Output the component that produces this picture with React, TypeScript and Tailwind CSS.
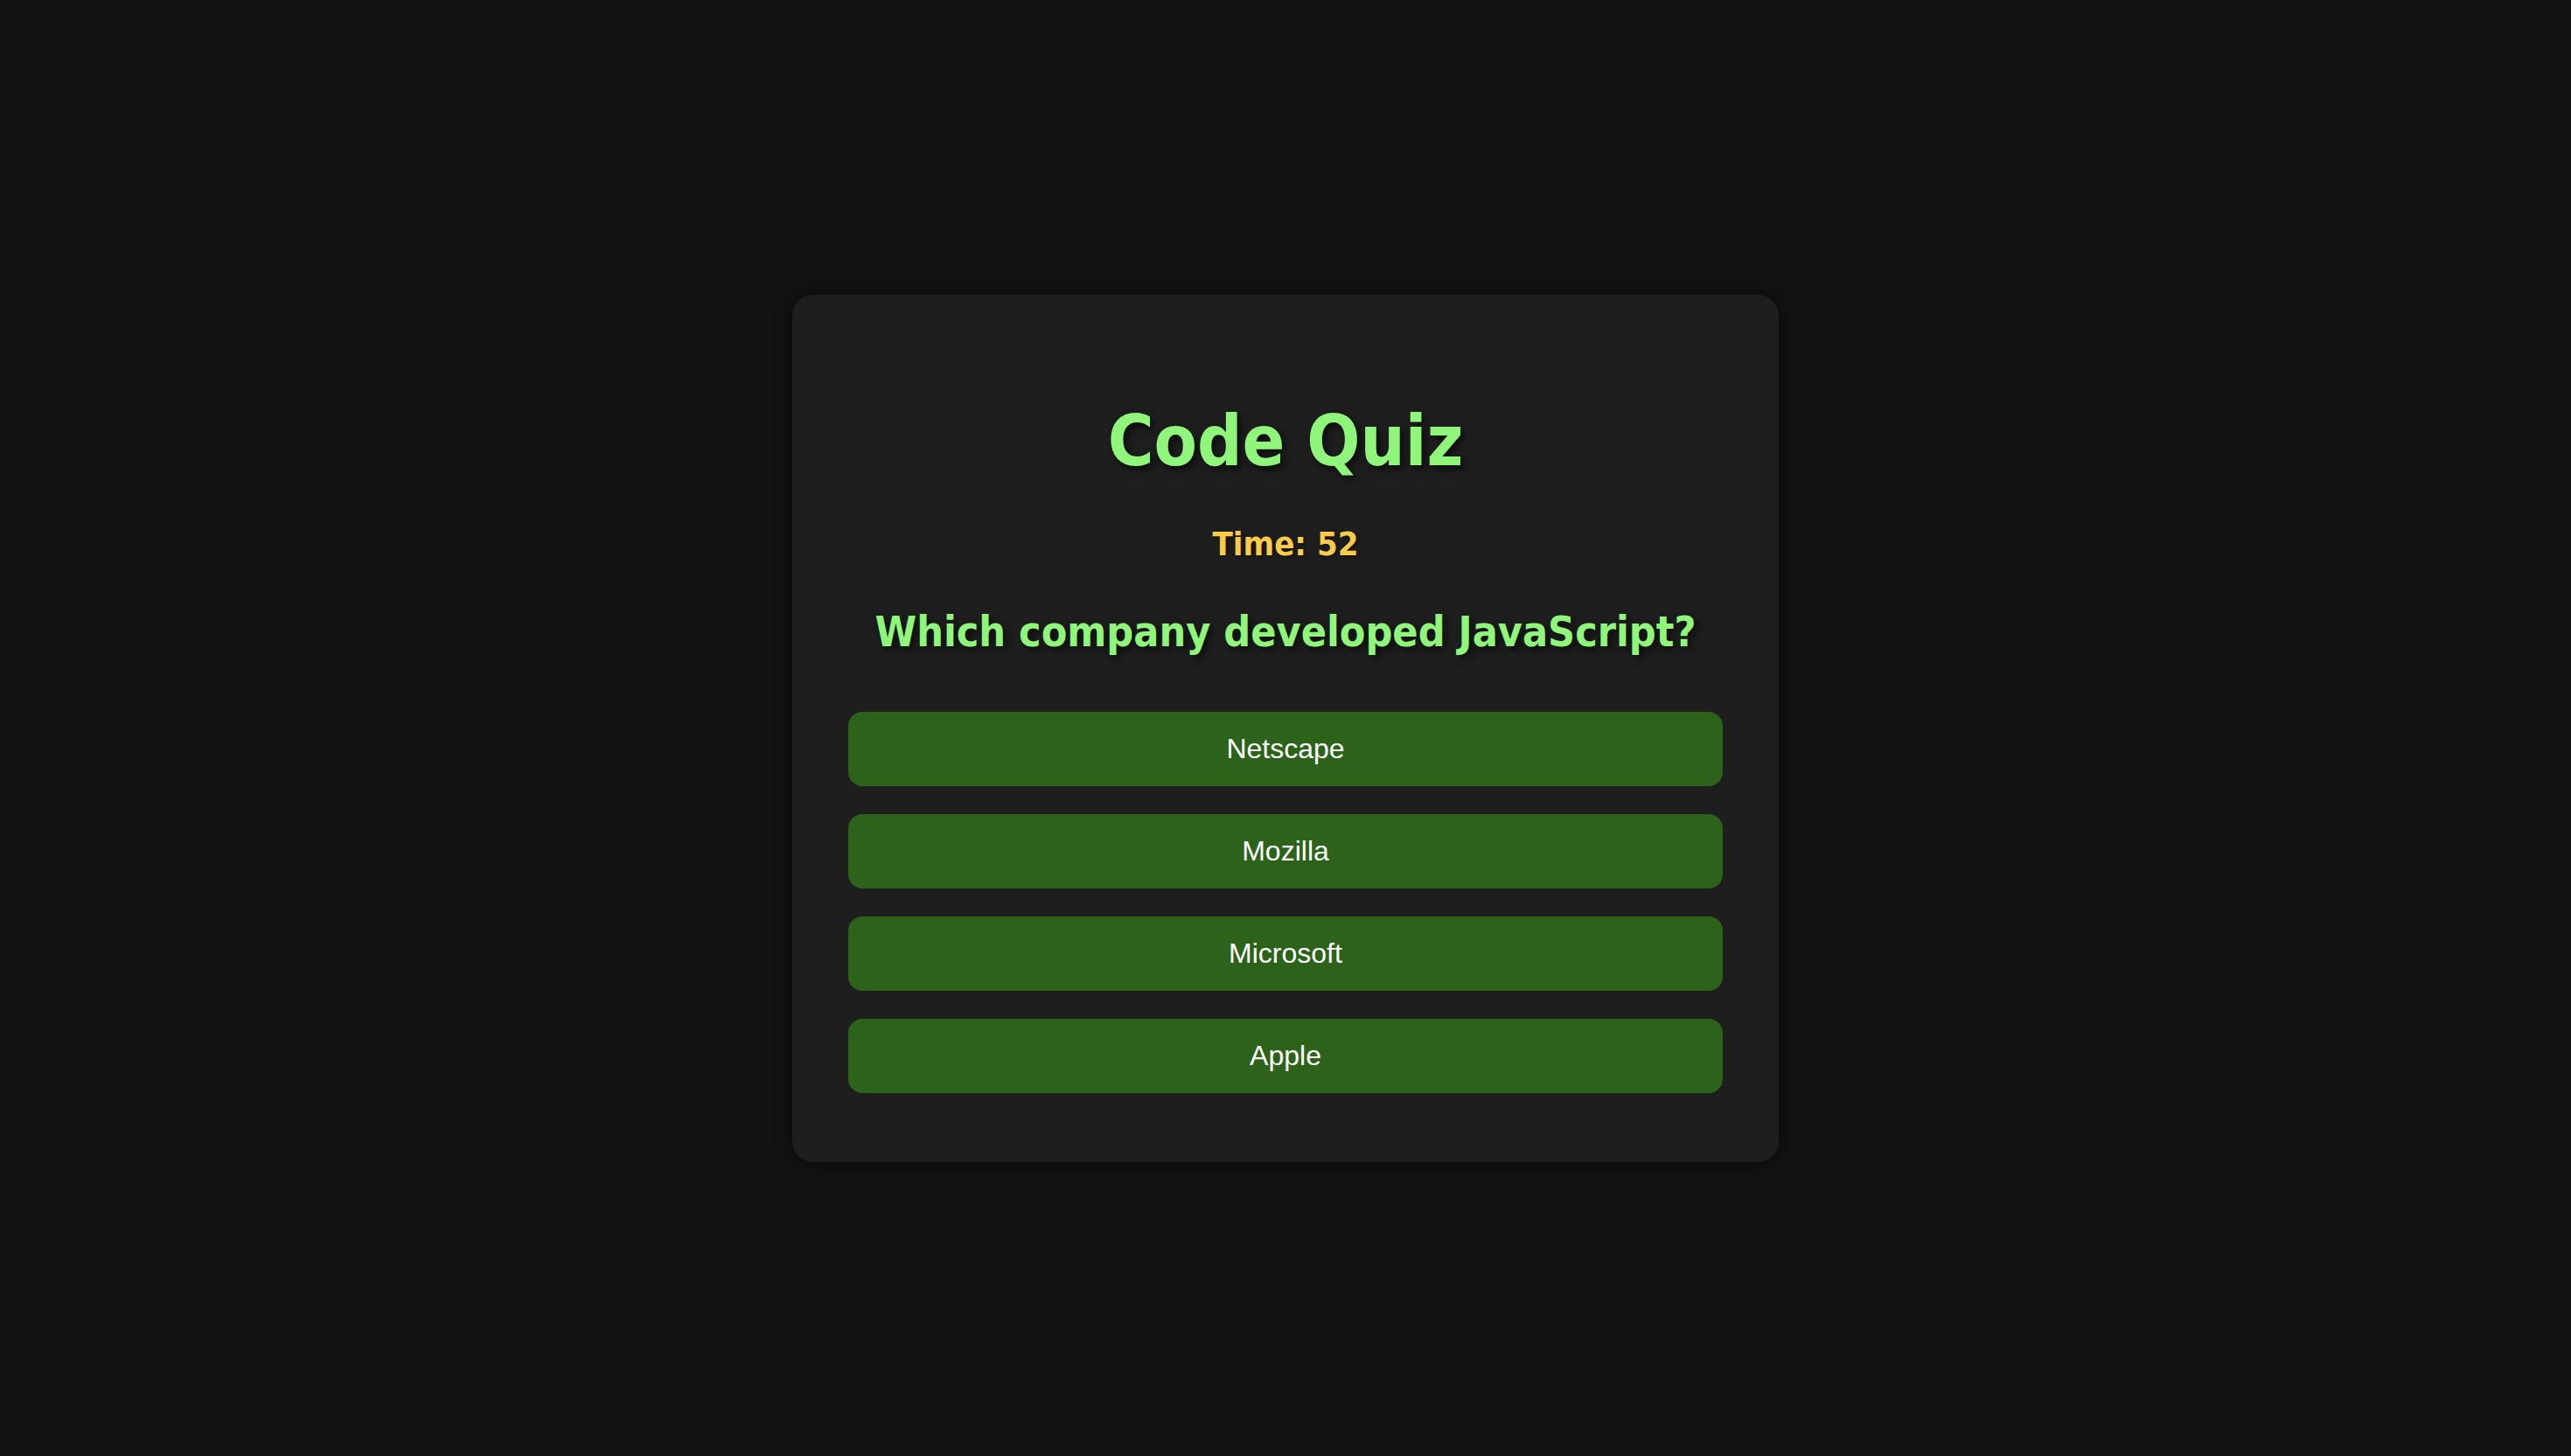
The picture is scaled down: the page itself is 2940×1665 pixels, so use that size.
const OPTIONS = ['Netscape', 'Mozilla', 'Microsoft', 'Apple'];

export default function App() {
  return (
    <div className="min-h-screen bg-[#121212] flex items-center justify-center font-['DejaVu_Sans_Condensed','DejaVu_Sans',sans-serif]">
      <div className="w-[1128px] bg-[#1e1e1e] rounded-[24px] shadow-[0_0_20px_rgba(0,0,0,0.5)] px-[64px] pt-[64px] pb-[79px] text-center">
        <h1 className="text-[80px] leading-[93px] font-bold text-[#90f57b] mt-[57px] [text-shadow:4px_4px_8px_rgba(0,0,0,0.6)]">
          Code Quiz
        </h1>
        <div className="text-[38px] leading-[45px] font-bold text-[#fbcb4b] mt-[49px] [text-shadow:2px_2px_4px_rgba(0,0,0,0.5)]">
          Time: 52
        </div>
        <h2 className="text-[48px] leading-[56px] font-bold text-[#90f57b] mt-[49px] [text-shadow:4px_4px_8px_rgba(0,0,0,0.6)]">
          Which company developed JavaScript?
        </h2>
        <div className="flex flex-col gap-[32px] mt-[64px]">
          {OPTIONS.map((opt) => (
            <button
              key={opt}
              type="button"
              className="w-full bg-[#2c6219] text-white rounded-[16px] py-[24px] text-[32px] leading-[37px] font-['Liberation_Sans',Arial,sans-serif]"
            >
              {opt}
            </button>
          ))}
        </div>
      </div>
    </div>
  );
}
